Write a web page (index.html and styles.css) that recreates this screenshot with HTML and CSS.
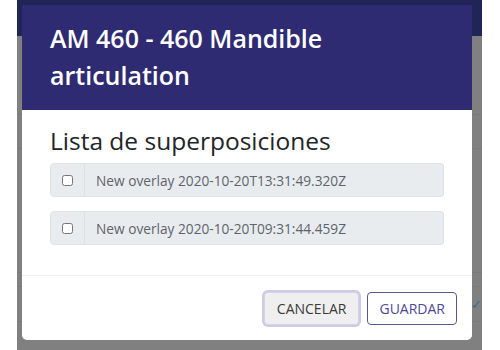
FILE: index.html
```html
<!DOCTYPE html>
<html lang="es">
<head>
  <meta charset="UTF-8" />
  <title>Superposiciones</title>
  <link rel="stylesheet" href="styles.css">
</head>
<body>
  <div class="page">
    <div class="topbar"></div>
    <div class="table">
      <div class="row" style="height: 78px"></div>
      <div class="row" style="height: 33px"></div>
      <div class="row" style="height: 123px"></div>
      <div class="row" style="height: 13px"></div>
      <div class="row" style="height: 34px"><span class="check">&#10003;</span></div>
    </div>

    <div class="modal">
      <div class="modal-header">
        <h2>AM 460 - 460 Mandible articulation</h2>
      </div>
      <div class="modal-body">
        <h3>Lista de superposiciones</h3>
        <div class="input-group">
          <label class="prepend"><input type="checkbox" /></label>
          <div class="field">New overlay 2020-10-20T13:31:49.320Z</div>
        </div>
        <div class="input-group">
          <label class="prepend"><input type="checkbox" /></label>
          <div class="field">New overlay 2020-10-20T09:31:44.459Z</div>
        </div>
      </div>
      <div class="modal-footer">
        <button type="button" class="btn cancel-btn">CANCELAR</button>
        <button type="button" class="btn save-btn">GUARDAR</button>
      </div>
    </div>
  </div>
</body>
</html>
```

FILE: styles.css
```css
body {
  margin: 0;
  background: #fff;
  font-family: "Open Sans", "Noto Sans", sans-serif;
  color: #212529;
}

.page {
  position: relative;
  margin-left: 17px;
  width: 465px;
  height: 350px;
  background: #808080;
}

.topbar {
  height: 36px;
  background: #1f2557;
}

.row {
  border-bottom: 1px solid #7a7a7a;
  position: relative;
}

.check {
  position: absolute;
  right: 0;
  top: 8px;
  color: #3d6a8c;
  font-size: 13px;
}

.modal {
  position: absolute;
  left: 5px;
  top: 5px;
  width: 450px;
  background: #fff;
  border-radius: 0 0 5px 5px;
  overflow: hidden;
}

.modal-header {
  background: #2f2b73;
  padding: 15px 28px 16px;
}

.modal-header h2 {
  margin: 0;
  max-width: 340px;
  color: #fff;
  font-size: 25px;
  font-weight: 600;
  line-height: 37px;
}

.modal-body {
  padding: 16px 28px 30px;
}

.modal-body h3 {
  margin: 0 0 7px;
  font-size: 24.5px;
  font-weight: 400;
  line-height: 30px;
}

.input-group {
  display: flex;
  height: 34px;
  margin-bottom: 14px;
}

.input-group:last-child {
  margin-bottom: 0;
}

.prepend {
  width: 33px;
  display: flex;
  align-items: center;
  justify-content: center;
  background: #e9ecef;
  border: 1px solid #dde1e5;
  border-radius: 4px 0 0 4px;
}

.prepend input {
  margin: 0;
  width: 11px;
  height: 11px;
}

.field {
  flex: 1;
  display: flex;
  align-items: center;
  padding: 0 11px;
  background: #e9ecef;
  border: 1px solid #dde1e5;
  border-left: none;
  border-radius: 0 4px 4px 0;
  font-size: 13.7px;
  color: #5e646b;
}

.modal-footer {
  border-top: 1px solid #eceef0;
  display: flex;
  justify-content: flex-end;
  align-items: center;
  gap: 8px;
  padding: 16px 15px 15px;
}

.btn {
  height: 33px;
  padding: 0 12px;
  font-family: inherit;
  font-size: 14px;
  border-radius: 4px;
  background: #fff;
}

.cancel-btn {
  background: #efefef;
  color: #3a3a3a;
  border: 1px solid #d6d3e8;
  box-shadow: 0 0 0 2px #cdcae4;
}

.save-btn {
  padding: 0 11px;
  color: #4f4894;
  border: 1px solid #5a549d;
}
```
